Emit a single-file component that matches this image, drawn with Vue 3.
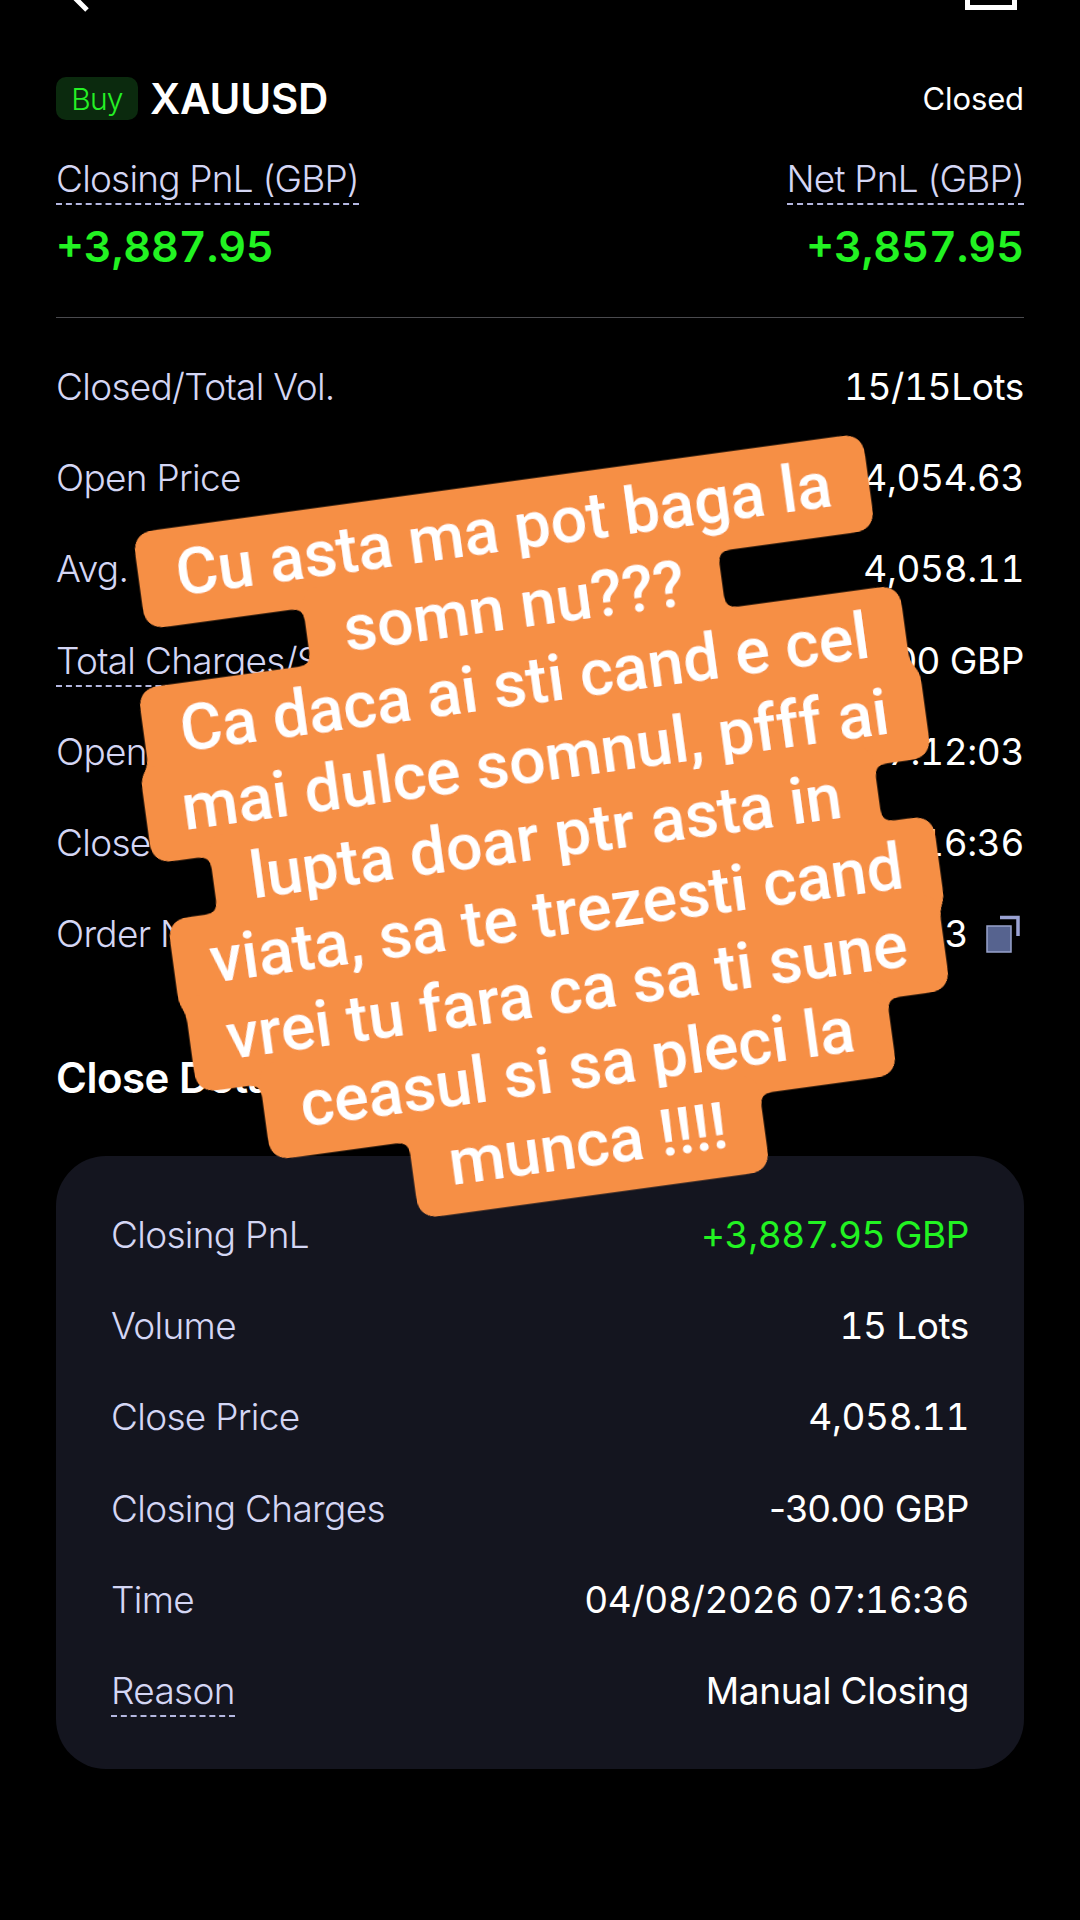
<script setup>
const mainRows = [
  { label: 'Closed/Total Vol.', value: '15/15Lots' },
  { label: 'Open Price', value: '4,054.63' },
  { label: 'Avg. Close Price', value: '4,058.11' },
  { label: 'Total Charges/Swap', value: '-30.00 GBP', dashed: true, plain: true },
  { label: 'Open Time', value: '04/08/2026 07:12:03' },
  { label: 'Close Time', value: '04/08/2026 07:16:36' },
  { label: 'Order No.', value: '7160428213', copy: true },
]

const closeRows = [
  { label: 'Closing PnL', value: '+3,887.95 GBP', green: true },
  { label: 'Volume', value: '15 Lots' },
  { label: 'Close Price', value: '4,058.11' },
  { label: 'Closing Charges', value: '-30.00 GBP', plain: true },
  { label: 'Time', value: '04/08/2026 07:16:36' },
  { label: 'Reason', value: 'Manual Closing', dashed: true },
]

const stickerLines = [
  'Cu asta ma pot baga la',
  'somn nu???',
  'Ca daca ai sti cand e cel',
  'mai dulce somnul, pfff ai',
  'lupta doar ptr asta in',
  'viata, sa te trezesti cand',
  'vrei tu fara ca sa ti sune',
  'ceasul si sa pleci la',
  'munca !!!!',
]
</script>

<template>
  <div class="page">
    <header class="nav">
      <svg class="back" width="40" height="60" viewBox="0 0 40 60" fill="none">
        <path d="M32 6 L8 30 L32 54" stroke="#fff" stroke-width="5" />
      </svg>
      <span class="nav-title">Position Details</span>
      <span class="nav-box"></span>
    </header>

    <div class="symbol-row">
      <div class="symbol">
        <span class="badge">Buy</span>
        <span class="pair">XAUUSD</span>
      </div>
      <span class="status">Closed</span>
    </div>

    <div class="pnl-row">
      <div class="pnl">
        <span class="pnl-label">Closing PnL (GBP)</span>
        <span class="pnl-value">+3,887.95</span>
      </div>
      <div class="pnl pnl-right">
        <span class="pnl-label">Net PnL (GBP)</span>
        <span class="pnl-value">+3,857.95</span>
      </div>
    </div>

    <div class="divider"></div>

    <div class="rows">
      <div v-for="row in mainRows" :key="row.label" class="row">
        <span class="label" :class="{ dashed: row.dashed }">{{ row.label }}</span>
        <span class="value" :class="{ plain: row.plain }">
          {{ row.value }}
          <svg v-if="row.copy" class="copy" width="34" height="38" viewBox="0 0 34 38">
            <path d="M14 2.5 H32 V21" fill="none" stroke="#9aa2d2" stroke-width="3.5" />
            <rect x="1" y="11" width="24" height="26" fill="#56638f" stroke="#98a2cc" stroke-width="1.5" />
          </svg>
        </span>
      </div>
    </div>

    <h2 class="section-title">Close Details</h2>

    <section class="card">
      <div v-for="row in closeRows" :key="row.label" class="row">
        <span class="label" :class="{ dashed: row.dashed }">{{ row.label }}</span>
        <span class="value" :class="{ green: row.green, plain: row.plain }">{{ row.value }}</span>
      </div>
    </section>

    <!-- caption sticker on top of the screenshot -->
    <svg class="filter-defs" width="0" height="0">
      <filter id="sticker-goo" x="-5%" y="-5%" width="110%" height="110%">
        <feGaussianBlur in="SourceGraphic" stdDeviation="6" result="blur" />
        <feColorMatrix in="blur" values="1 0 0 0 0  0 1 0 0 0  0 0 1 0 0  0 0 0 22 -10" result="goo" />
        <feComposite in="SourceGraphic" in2="goo" operator="atop" />
      </filter>
    </svg>
    <div class="sticker">
      <div v-for="line in stickerLines" :key="line" class="sticker-line">{{ line }}</div>
    </div>
  </div>
</template>

<style scoped>
.page {
  position: relative;
  width: 1080px;
  height: 1920px;
  overflow: hidden;
  background: #000;
  color: #fff;
  font-family: Inter, "Liberation Sans", sans-serif;
  padding: 0 56px;
  box-sizing: border-box;
}

.nav {
  display: flex;
  align-items: flex-end;
  justify-content: space-between;
  height: 60px;
  margin-top: -50px;
}

.back {
  margin-left: -1px;
  margin-bottom: -6px;
}

.nav-title {
  font-size: 38px;
  font-weight: 600;
  line-height: 1;
  margin-bottom: 9px;
  margin-left: 20px;
}

.nav-box {
  width: 52px;
  height: 50px;
  border: 5px solid #fff;
  box-sizing: border-box;
  margin-right: 7px;
}

.symbol-row {
  display: flex;
  align-items: center;
  justify-content: space-between;
  margin-top: 67px;
  height: 43px;
}

.symbol {
  display: flex;
  align-items: center;
  gap: 12px;
}

.badge {
  display: flex;
  align-items: center;
  justify-content: center;
  width: 82px;
  height: 43px;
  border-radius: 10px;
  background: #0b2a0e;
  color: #25f025;
  font-size: 30px;
  font-weight: 300;
  letter-spacing: -0.8px;
}

.pair {
  font-size: 42px;
  font-weight: 600;
  letter-spacing: -0.2px;
}

.status {
  font-size: 31px;
  font-weight: 400;
  letter-spacing: -0.1px;
}

.pnl-row {
  display: flex;
  justify-content: space-between;
  margin-top: 36px;
}

.pnl {
  display: flex;
  flex-direction: column;
  align-items: flex-start;
}

.pnl-right {
  align-items: flex-end;
}

.pnl-label {
  font-size: 37px;
  font-weight: 300;
  line-height: 46px;
  letter-spacing: -0.8px;
  color: #d4d6f4;
  border-bottom: 2px dashed #b4b7e0;
  padding-bottom: 1px;
}

.pnl-value {
  font-size: 43px;
  font-weight: 600;
  line-height: 50px;
  margin-top: 16px;
  margin-bottom: 1px;
  color: #22f322;
  font-variant-numeric: tabular-nums;
}

.divider {
  height: 1px;
  background: #4a4a4e;
  margin-top: 45px;
}

.rows {
  margin-top: 23px;
}

.row {
  display: flex;
  align-items: center;
  justify-content: space-between;
  height: 91.3px;
}

.label {
  font-size: 37px;
  font-weight: 300;
  line-height: 44px;
  letter-spacing: -0.7px;
  color: #d4d6f4;
}

.label.dashed {
  border-bottom: 2px dashed #b4b7e0;
  margin-bottom: -4px;
  padding-bottom: 2px;
}

.value {
  display: flex;
  align-items: center;
  font-size: 37px;
  font-weight: 400;
  line-height: 44px;
  letter-spacing: -0.4px;
  font-variant-numeric: tabular-nums;
}

.value.plain {
  font-variant-numeric: normal;
}

.value.green {
  color: #22f322;
}

.copy {
  margin-left: 18px;
  margin-right: 4px;
}

.section-title {
  font-size: 42px;
  font-weight: 600;
  letter-spacing: -0.5px;
  margin: 73px 0 0;
  line-height: 50px;
}

.card {
  margin-top: 53px;
  padding: 33px 55px 34px;
  height: 613px;
  box-sizing: border-box;
  border-radius: 50px;
  background: #14151f;
}

.filter-defs {
  position: absolute;
}

.sticker {
  position: absolute;
  left: 546px;
  top: 839px;
  transform: translate(-50%, -50%) rotate(-7.8deg);
  display: flex;
  flex-direction: column;
  align-items: center;
  width: 900px;
  filter: url(#sticker-goo);
}

.sticker-line {
  height: 97px;
  margin-bottom: -19.4px;
  padding: 0 37px;
  border-radius: 16px;
  background: #f68f45;
  color: #fff;
  font-family: Roboto, "Liberation Sans", sans-serif;
  font-size: 64.5px;
  font-weight: 500;
  line-height: 93px;
  white-space: nowrap;
}

.sticker-line:last-child {
  margin-bottom: 0;
}
</style>
